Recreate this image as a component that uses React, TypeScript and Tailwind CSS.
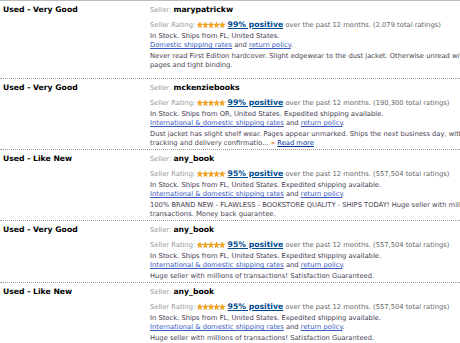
import React from 'react';

type Offer = {
  condition: string;
  seller: string;
  pct: string;
  total: string;
  stock: string;
  shipLink: string;
  desc: React.ReactNode;
};

const offers: Offer[] = [
  {
    condition: 'Used - Very Good',
    seller: 'marypatrickw',
    pct: '99%',
    total: '2,079',
    stock: 'In Stock. Ships from FL, United States.',
    shipLink: 'Domestic shipping rates',
    desc: (
      <>
        Never read First Edition hardcover. Slight edgewear to the dust jacket. Otherwise unread with clean
        <br />
        pages and tight binding.
      </>
    ),
  },
  {
    condition: 'Used - Very Good',
    seller: 'mckenziebooks',
    pct: '99%',
    total: '190,300',
    stock: 'In Stock. Ships from OR, United States. Expedited shipping available.',
    shipLink: 'International & domestic shipping rates',
    desc: (
      <>
        Dust jacket has slight shelf wear. Pages appear unmarked. Ships the next business day, with
        <br />
        tracking and delivery confirmatio... <span className="text-[#e47911] font-bold">»</span>{' '}
        <a className="text-[#003399] underline">Read more</a>
      </>
    ),
  },
  {
    condition: 'Used - Like New',
    seller: 'any_book',
    pct: '95%',
    total: '557,504',
    stock: 'In Stock. Ships from FL, United States. Expedited shipping available.',
    shipLink: 'International & domestic shipping rates',
    desc: (
      <>
        100% BRAND NEW - FLAWLESS - BOOKSTORE QUALITY - SHIPS TODAY! Huge seller with millions of
        <br />
        transactions. Money back guarantee.
      </>
    ),
  },
  {
    condition: 'Used - Very Good',
    seller: 'any_book',
    pct: '95%',
    total: '557,504',
    stock: 'In Stock. Ships from FL, United States. Expedited shipping available.',
    shipLink: 'International & domestic shipping rates',
    desc: 'Huge seller with millions of transactions! Satisfaction Guaranteed.',
  },
  {
    condition: 'Used - Like New',
    seller: 'any_book',
    pct: '95%',
    total: '557,504',
    stock: 'In Stock. Ships from FL, United States. Expedited shipping available.',
    shipLink: 'International & domestic shipping rates',
    desc: 'Huge seller with millions of transactions! Satisfaction Guaranteed.',
  },
];

const Stars = () => (
  <svg width="28" height="6" viewBox="0 0 28 6" className="inline-block align-[-0.5px]">
    {[0, 1, 2, 3, 4].map((i) => (
      <polygon
        key={i}
        transform={`translate(${i * 5.6} 0)`}
        points="2.8,0 3.5,2 5.6,2.1 3.9,3.4 4.5,5.8 2.8,4.4 1.1,5.8 1.7,3.4 0,2.1 2.1,2"
        fill="#f7a81b"
        stroke="#d9850a"
        strokeWidth="0.4"
      />
    ))}
  </svg>
);

const OfferRow = ({ o, first }: { o: Offer; first: boolean }) => (
  <div
    className={
      first
        ? 'flex border-b border-dotted border-[#9a9a9a] pt-[4px] pb-[8px]'
        : 'flex border-b border-dotted border-[#9a9a9a] pt-[4px] pb-[1px]'
    }
  >
    <div className="w-[150px] shrink-0 pl-[3px] text-[7.7px] leading-[10px] font-bold text-black">
      {o.condition}
    </div>
    <div className="whitespace-nowrap text-[6.75px] text-[#555]">
      <div className="leading-[10px]">
        <span className="text-[#999]">Seller: </span>
        <span className="text-[7.7px] font-bold text-black">{o.seller}</span>
      </div>
      <div className="mt-[5px] leading-[10px] text-[#666]">
        <span className="text-[#999]">Seller Rating: </span>
        <Stars />{' '}
        <a className="text-[7.7px] font-bold text-[#004b91] underline">{o.pct} positive</a> over the past 12
        months. ({o.total} total ratings)
      </div>
      <div className="mt-[2px] leading-[9px] text-[#43394f]">
        {o.stock}
        <br />
        <a className="text-[#3658c0] underline">{o.shipLink}</a> and{' '}
        <a className="text-[#3658c0] underline">return policy</a>.
      </div>
      <div className="mt-[2px] leading-[9px] text-[#4a4352]">{o.desc}</div>
    </div>
  </div>
);

export default function App() {
  return (
    <div
      className="w-[460px] h-[343px] overflow-hidden bg-white border-t border-[#bdbdbd]"
      style={{ fontFamily: '"DejaVu Sans", Verdana, sans-serif' }}
    >
      {offers.map((o, i) => (
        <OfferRow key={i} o={o} first={i === 0} />
      ))}
    </div>
  );
}
